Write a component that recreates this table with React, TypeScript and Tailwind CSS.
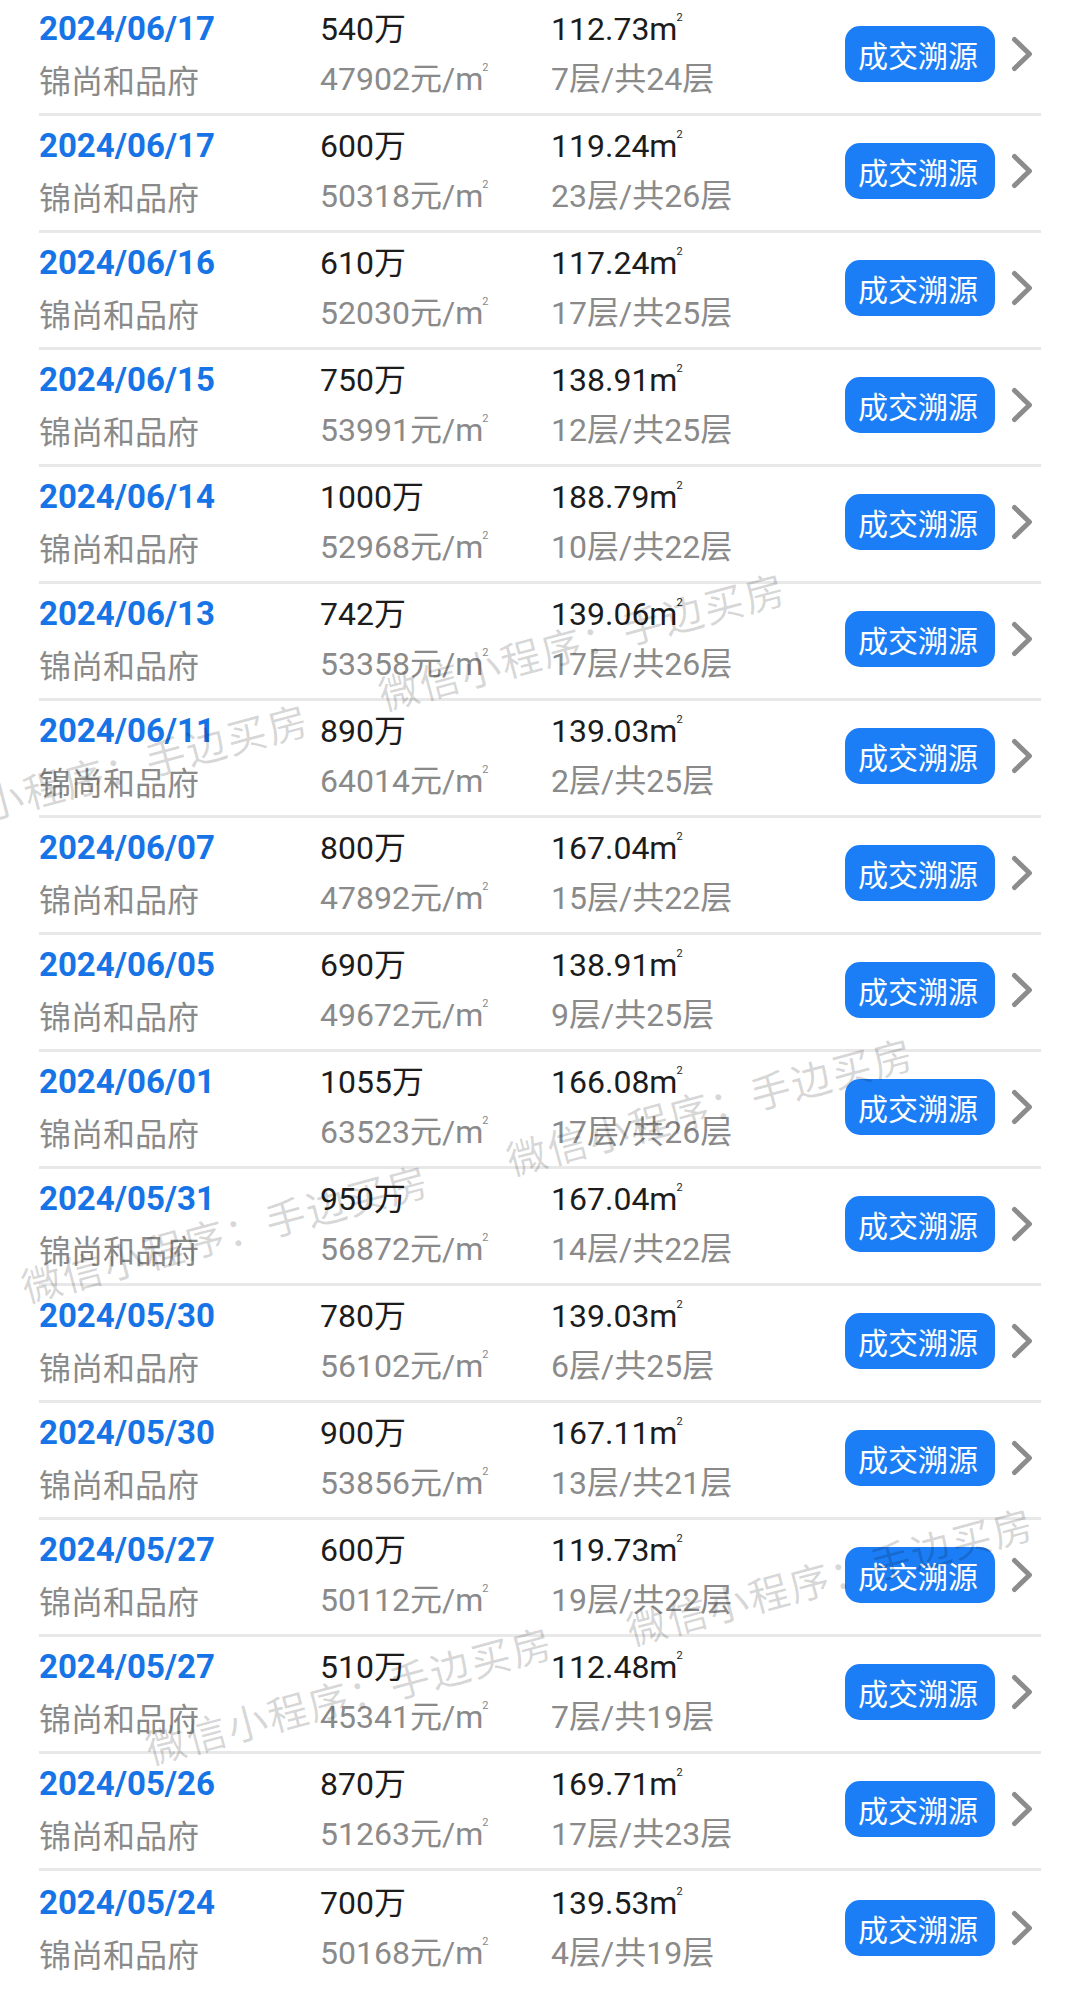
import React from "react";

type Row = { date: string; price: string; area: string; unit: string; floor: string };

const rows: Row[] = [
  { date: "2024/06/17", price: "540", area: "112.73", unit: "47902", floor: "7层/共24层" },
  { date: "2024/06/17", price: "600", area: "119.24", unit: "50318", floor: "23层/共26层" },
  { date: "2024/06/16", price: "610", area: "117.24", unit: "52030", floor: "17层/共25层" },
  { date: "2024/06/15", price: "750", area: "138.91", unit: "53991", floor: "12层/共25层" },
  { date: "2024/06/14", price: "1000", area: "188.79", unit: "52968", floor: "10层/共22层" },
  { date: "2024/06/13", price: "742", area: "139.06", unit: "53358", floor: "17层/共26层" },
  { date: "2024/06/11", price: "890", area: "139.03", unit: "64014", floor: "2层/共25层" },
  { date: "2024/06/07", price: "800", area: "167.04", unit: "47892", floor: "15层/共22层" },
  { date: "2024/06/05", price: "690", area: "138.91", unit: "49672", floor: "9层/共25层" },
  { date: "2024/06/01", price: "1055", area: "166.08", unit: "63523", floor: "17层/共26层" },
  { date: "2024/05/31", price: "950", area: "167.04", unit: "56872", floor: "14层/共22层" },
  { date: "2024/05/30", price: "780", area: "139.03", unit: "56102", floor: "6层/共25层" },
  { date: "2024/05/30", price: "900", area: "167.11", unit: "53856", floor: "13层/共21层" },
  { date: "2024/05/27", price: "600", area: "119.73", unit: "50112", floor: "19层/共22层" },
  { date: "2024/05/27", price: "510", area: "112.48", unit: "45341", floor: "7层/共19层" },
  { date: "2024/05/26", price: "870", area: "169.71", unit: "51263", floor: "17层/共23层" },
  { date: "2024/05/24", price: "700", area: "139.53", unit: "50168", floor: "4层/共19层" },
];

const Sup = () => (
  <span className="relative -top-[19px] -ml-[1px] inline-block text-[11px] leading-none">2</span>
);

const Chevron = () => (
  <svg width="22" height="36" viewBox="0 0 22 36" fill="none">
    <polyline
      points="3.5,3.5 18.5,18 3.5,32.5"
      stroke="#8c8c8c"
      strokeWidth="5"
      strokeLinecap="round"
      strokeLinejoin="round"
    />
  </svg>
);

const marks: { cls: string }[] = [
  { cls: "left-[582px] top-[640px]" },
  { cls: "left-[105px] top-[771px]" },
  { cls: "left-[710px] top-[1105px]" },
  { cls: "left-[225px] top-[1232px]" },
  { cls: "left-[830px] top-[1575px]" },
  { cls: "left-[349px] top-[1694px]" },
];

export default function App() {
  return (
    <div className="relative w-[1080px] overflow-hidden bg-white font-['Roboto','Noto_Sans_CJK_SC',sans-serif]">
      <div className="-mt-[1px] px-[39px]">
        {rows.map((r, i) => (
          <div
            key={i}
            className={
              "flex h-[117px] items-center pb-[4px] " +
              (i === rows.length - 1 ? "" : "border-b-[3px] border-[#e8e8e8]")
            }
          >
            <div className="flex w-[281px] flex-col">
              <div className="text-[33px] font-bold leading-[50px] text-[#1674e6]">{r.date}</div>
              <div className="font-['Noto_Sans_CJK_SC',sans-serif] text-[32px] leading-[50px] text-[#8a8a8a]">
                锦尚和品府
              </div>
            </div>
            <div className="flex w-[231px] flex-col">
              <div className="text-[32px] leading-[50px] text-[#1c1c1c] whitespace-nowrap">
                {r.price}万
              </div>
              <div className="text-[32px] leading-[50px] text-[#8a8a8a] whitespace-nowrap">
                {r.unit}元/m
                <Sup />
              </div>
            </div>
            <div className="flex flex-1 flex-col">
              <div className="text-[32px] leading-[50px] text-[#1c1c1c] whitespace-nowrap">
                {r.area}m
                <Sup />
              </div>
              <div className="text-[32px] leading-[50px] text-[#8a8a8a] whitespace-nowrap">{r.floor}</div>
            </div>
            <div className="flex h-[56px] w-[150px] items-center justify-center rounded-[15px] bg-[#1c7ef6] pr-[4px] font-['Noto_Sans_CJK_SC',sans-serif] text-[30px] leading-none text-white">
              成交溯源
            </div>
            <div className="ml-[16px] mr-[8px] flex w-[22px] items-center">
              <Chevron />
            </div>
          </div>
        ))}
      </div>
      <div className="pointer-events-none absolute inset-0">
        {marks.map((m, i) => (
          <div
            key={i}
            className={
              "absolute -translate-x-1/2 -translate-y-1/2 -rotate-[15deg] whitespace-nowrap font-['Noto_Sans_CJK_SC',sans-serif] text-[40px] leading-none tracking-[2px] text-black/[0.16] " +
              m.cls
            }
          >
            微信小程序：手边买房
          </div>
        ))}
      </div>
    </div>
  );
}
